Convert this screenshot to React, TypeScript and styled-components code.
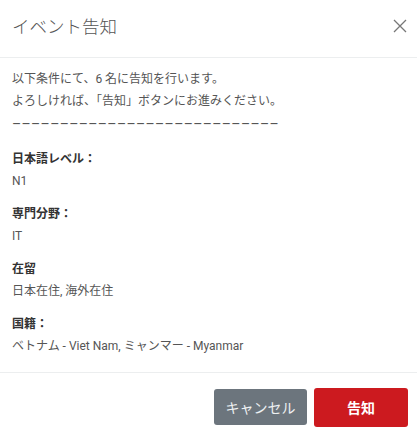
import React from "react";
import styled, { createGlobalStyle } from "styled-components";

const GlobalStyle = createGlobalStyle`
  html, body {
    margin: 0;
    padding: 0;
    background: #fff;
  }
  body {
    font-family: Roboto, "Noto Sans CJK JP", sans-serif;
  }
`;

const Modal = styled.div`
  width: 417px;
  height: 441px;
  display: flex;
  flex-direction: column;
  background: #fff;
`;

const Header = styled.div`
  height: 58px;
  display: flex;
  align-items: center;
  justify-content: space-between;
  padding: 0 9px 6px 12px;
  box-sizing: border-box;
  border-bottom: 1px solid #eceeef;
`;

const Title = styled.h1`
  margin: 0;
  font-size: 17.5px;
  font-weight: 300;
  color: #555;
`;

const CloseButton = styled.button`
  border: none;
  background: none;
  padding: 0;
  width: 16px;
  height: 16px;
  display: flex;
  align-items: center;
  justify-content: center;
  cursor: pointer;
`;

const Body = styled.div`
  flex: 1;
  padding: 10px 12px 13px;
  font-size: 12px;
  line-height: 22px;
  color: #555;
  border-bottom: 1px solid #eceeef;
`;

const Intro = styled.div`
  margin-bottom: 14px;
`;

const Dashes = styled.div`
  font-size: 14px;
  line-height: 24px;
  margin-bottom: -2px;
  letter-spacing: 0.35px;
  color: #555;
  white-space: nowrap;
`;

const Field = styled.div`
  margin-bottom: 11px;

  &:last-child {
    margin-bottom: 0;
  }
`;

const Label = styled.div`
  font-weight: 700;
  color: #333;
`;

const Footer = styled.div`
  height: 68px;
  display: flex;
  align-items: center;
  justify-content: flex-end;
  gap: 7px;
  padding: 0 9px 0 0;
  box-sizing: border-box;
`;

const Button = styled.button<{ $primary?: boolean }>`
  height: ${p => (p.$primary ? "39px" : "36px")};
  width: ${p => (p.$primary ? "94px" : "93px")};
  border: none;
  border-radius: 3px;
  font-family: Roboto, "Noto Sans CJK JP", sans-serif;
  font-size: 14px;
  font-weight: ${p => (p.$primary ? 700 : 400)};
  color: ${p => (p.$primary ? "#fff" : "#eef0f2")};
  background: ${p => (p.$primary ? "#cc1a1f" : "#6c757d")};
  cursor: pointer;
`;

const fields = [
  { label: "日本語レベル：", value: "N1" },
  { label: "専門分野：", value: "IT" },
  { label: "在留", value: "日本在住, 海外在住" },
  { label: "国籍：", value: "ベトナム - Viet Nam, ミャンマー - Myanmar" },
];

const App: React.FC = () => {
  return (
    <>
      <GlobalStyle />
      <Modal>
        <Header>
          <Title>イベント告知</Title>
          <CloseButton aria-label="閉じる">
            <svg width="14" height="14" viewBox="0 0 14 14">
              <path d="M1 1 L13 13 M13 1 L1 13" stroke="#777" strokeWidth="1.3" />
            </svg>
          </CloseButton>
        </Header>
        <Body>
          <Intro>
            <div>以下条件にて、6 名に告知を行います。</div>
            <div>よろしければ、「告知」ボタンにお進みください。</div>
            <Dashes>{"–".repeat(28)}</Dashes>
          </Intro>
          {fields.map(f => (
            <Field key={f.label}>
              <Label>{f.label}</Label>
              <div>{f.value}</div>
            </Field>
          ))}
        </Body>
        <Footer>
          <Button>キャンセル</Button>
          <Button $primary>告知</Button>
        </Footer>
      </Modal>
    </>
  );
};

export default App;
